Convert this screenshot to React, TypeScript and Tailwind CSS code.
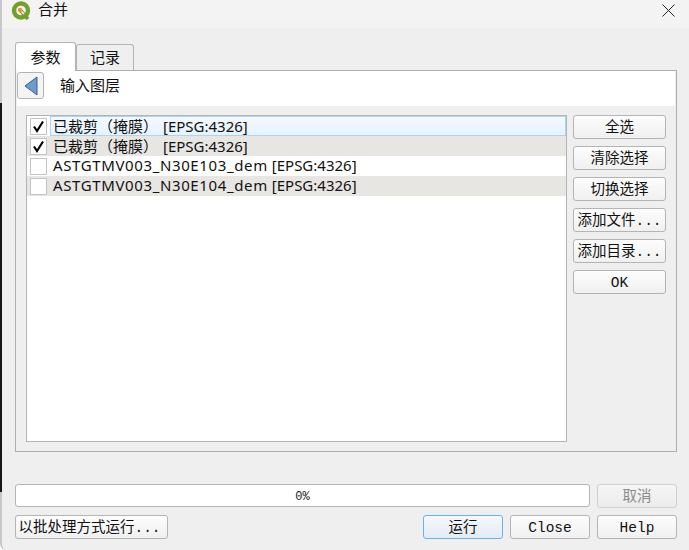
const cjk = "font-['Noto_Sans_CJK_SC',sans-serif]";
const mono = "font-['Liberation_Mono','Noto_Sans_CJK_SC',monospace]";
type Tone = "normal" | "disabled" | "default";
function Btn({ children, className = "", tone = "normal" }: { children: React.ReactNode; className?: string; tone?: Tone }) {
  const toneClass =
    tone === "disabled"
      ? "border-[#d0d0d0] from-[#f5f5f5] to-[#ececec] text-[#8a8a8a]"
      : tone === "default"
        ? "border-[#62b5f5] from-[#f6f9fc] to-[#e3ebf3] text-[#111]"
        : "border-[#b4b4b4] from-[#fdfdfd] to-[#f0f0f0] text-[#111]";
  return (
    <button className={`flex h-6 items-center justify-center rounded-[3px] border bg-gradient-to-b pt-[2px] text-[14.5px] leading-none whitespace-nowrap ${toneClass} ${className}`}>
      {children}
    </button>
  );
}
function Row({ checked, alt, active, name, gap }: { checked?: boolean; alt?: boolean; active?: boolean; name: string; gap?: boolean }) {
  return (
    <div className={`flex h-5 items-center pl-[3px] ${alt ? "bg-[#e8e6e2]" : ""}`}>
      <span className="flex h-[17px] w-[17px] shrink-0 items-center justify-center border border-[#c4c4c4] bg-white">
        {checked && (
          <svg width="13" height="13" viewBox="0 0 13 13">
            <path d="M2 6.5 L5 11 L11 1.5" fill="none" stroke="#000" strokeWidth="2.1" />
          </svg>
        )}
      </span>
      <span className={`ml-[3px] flex h-5 flex-1 items-center whitespace-pre text-[15px] text-[#111] font-['Noto_Sans','Noto_Sans_CJK_SC',sans-serif] ${active ? "border border-[#a9d5ef] bg-gradient-to-b from-[#f3f9fe] to-[#e6f3fd] pl-[2px]" : "pl-[3px]"}`}>
        {gap ? (
          <>
            <span>{name}</span>
            <span className="ml-[5px]">[EPSG:4326]</span>
          </>
        ) : (
          <span className="-mt-[2px]">
            <span className="tracking-[0.62px]">{name}</span>
            <span className="ml-[4px]">[EPSG:4326]</span>
          </span>
        )}
      </span>
    </div>
  );
}
export default function App() {
  return (
    <div className="relative h-[550px] w-[689px] overflow-hidden bg-white">
      <div className="absolute left-0 top-[103px] h-[389px] w-[2px] bg-[#161616]" />
      <div className={`flex h-[550px] w-[689px] flex-col overflow-hidden rounded-bl-[6px] border-l-2 border-[#c8c8c8] bg-[#efefef] ${mono}`}>
        <div className="flex h-[28px] shrink-0 items-start bg-[#f3f3f3] pl-[9px] pr-[14px] pt-[1px]">
          <svg width="20" height="20" viewBox="0 0 20 20">
            <circle cx="10" cy="9.5" r="7" fill="none" stroke="#72a02a" strokeWidth="4.4" />
            <path d="M10 10 L17 18" stroke="#72a02a" strokeWidth="3.6" />
            <path d="M9.5 9.5 L13 13" stroke="#f8f8f8" strokeWidth="1.6" />
            <circle cx="9" cy="9" r="2.2" fill="#ee8b3a" />
          </svg>
          <span className={`-mt-px ml-[7px] text-[15px] leading-[18px] text-[#111] ${cjk}`}>合并</span>
          <svg className="ml-auto mt-[3px]" width="13" height="13" viewBox="0 0 13 13">
            <path d="M0.5 0.5 L12.5 12.5 M12.5 0.5 L0.5 12.5" stroke="#222" strokeWidth="1" />
          </svg>
        </div>
        <div className="flex flex-1 flex-col pl-[13px] pr-[12px] pb-[11px] pt-[14px]">
          <div className="flex h-[28px] items-end">
            <div className={`z-10 -mb-px flex h-[29px] w-[61px] items-center justify-center rounded-t-[3px] border border-b-0 border-[#b4b4b4] bg-white text-[15px] text-[#111] ${cjk}`}>参数</div>
            <div className={`flex h-[26px] w-[58px] items-center justify-center rounded-t-[3px] border border-b-0 border-[#b4b4b4] bg-[#efefef] text-[15px] text-[#111] ${cjk}`}>记录</div>
          </div>
          <div className="flex h-[382px] flex-col border border-[#adadad] bg-[#efefef] pl-px pr-[2px]">
            <div className="-mr-[1px] flex h-[35px] shrink-0 items-start bg-white pt-px">
              <button className="flex h-[27px] w-[27px] items-center justify-center rounded-[3px] border border-[#b4b4b4] bg-[#f4f4f4]">
                <svg width="14" height="20" viewBox="0 0 14 20">
                  <path d="M13 1 V19 L1 10 Z" fill="#6c9bcf" stroke="#39618c" strokeWidth="1" />
                </svg>
              </button>
              <span className={`ml-[16px] mt-[2px] text-[15px] text-[#111] ${cjk}`}>输入图层</span>
            </div>
            <div className="flex flex-1 gap-[6px] pl-[9px] pt-[9px] pb-[9px]">
              <div className="h-[327px] w-[541px] border border-[#b4b4b4] bg-white">
                <Row checked active gap name="已裁剪（掩膜）" />
                <Row checked alt gap name="已裁剪（掩膜）" />
                <Row name="ASTGTMV003_N30E103_dem" />
                <Row alt name="ASTGTMV003_N30E104_dem" />
              </div>
              <div className="flex w-[93px] flex-col gap-[7px]">
                <Btn className="w-full">全选</Btn>
                <Btn className="w-full">清除选择</Btn>
                <Btn className="w-full">切换选择</Btn>
                <Btn className="w-full">添加文件...</Btn>
                <Btn className="w-full">添加目录...</Btn>
                <Btn className="w-full">OK</Btn>
              </div>
            </div>
          </div>
          <div className="mt-[32px] flex gap-[7px]">
            <div className="flex h-[23px] w-[575px] items-center justify-center rounded-[3px] border border-[#b4b4b4] bg-white pt-[2px] text-[12px] text-[#222]">0%</div>
            <Btn className="w-20" tone="disabled">取消</Btn>
          </div>
          <div className="mt-[7px] flex gap-[7px]">
            <Btn className="mr-auto w-[153px] pr-[4px]">以批处理方式运行...</Btn>
            <Btn className="w-20" tone="default">运行</Btn>
            <Btn className="w-20">Close</Btn>
            <Btn className="w-20">Help</Btn>
          </div>
        </div>
      </div>
    </div>
  );
}
